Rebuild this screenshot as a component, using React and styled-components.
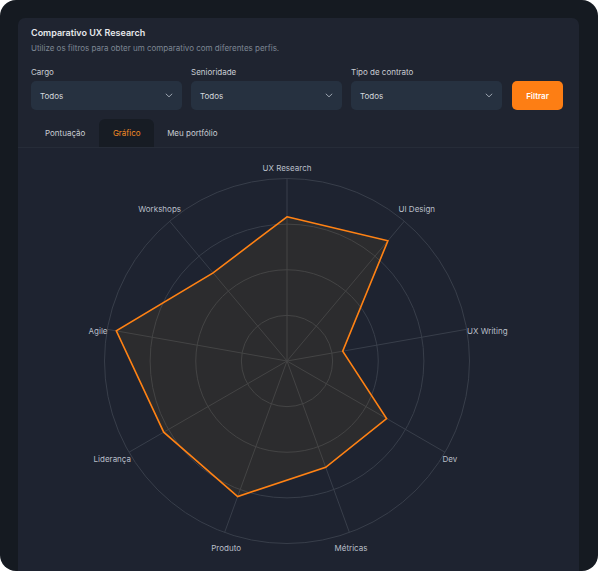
import styled, { createGlobalStyle } from "styled-components";

const GlobalStyle = createGlobalStyle`
  html, body {
    margin: 0;
    padding: 0;
    background: #ffffff;
  }
  * {
    box-sizing: border-box;
  }
`;

const Frame = styled.div`
  width: 598px;
  height: 571px;
  background: #151a21;
  border-radius: 16px;
  overflow: hidden;
  padding: 18px 19px 0 18px;
  font-family: Inter, "Noto Sans", sans-serif;
`;

const Card = styled.div`
  background: #1f2430;
  border-radius: 7px 7px 0 0;
  height: 100%;
  display: flex;
  flex-direction: column;
`;

const Header = styled.div`
  padding: 8px 15px 0 13px;
`;

const Title = styled.h1`
  margin: 0;
  font-size: 9px;
  line-height: 14px;
  font-weight: 600;
  color: #e6e8ec;
`;

const Subtitle = styled.p`
  margin: 2px 0 0;
  font-size: 8px;
  line-height: 12px;
  color: #7d8693;
`;

const Filters = styled.div`
  display: grid;
  grid-template-columns: 151px 151px 151px 52px;
  column-gap: 9px;
  align-items: end;
  margin-top: 12px;
`;

const Field = styled.div`
  display: flex;
  flex-direction: column;
  gap: 3px;
`;

const Label = styled.span`
  font-size: 8px;
  line-height: 12px;
  color: #c9cdd3;
`;

const Select = styled.div`
  height: 29px;
  background: #263140;
  border-radius: 5px;
  display: flex;
  align-items: center;
  justify-content: space-between;
  padding: 0 9px 0 9px;
  font-size: 8px;
  color: #d3d7dd;
`;

const FilterButton = styled.button`
  height: 29px;
  margin-left: 1px;
  border: none;
  border-radius: 5px;
  background: #fd7e14;
  color: #ffffff;
  font-family: inherit;
  font-size: 8px;
  font-weight: 600;
  padding: 0;
`;

const Tabs = styled.div`
  display: flex;
  margin-top: 9px;
  padding-left: 13px;
  border-bottom: 1px solid #262c38;
`;

const Tab = styled.div`
  height: 28px;
  padding: 0 ${(p) => p.$pad}px;
  display: flex;
  align-items: center;
  font-size: 8px;
  color: ${(p) => (p.$active ? "#f28a24" : "#c9cdd3")};
  background: ${(p) => (p.$active ? "#171c24" : "transparent")};
  border-radius: 6px 6px 0 0;
`;

const Panel = styled.div`
  flex: 1;
  background: #1e2330;
`;

const ChartSvg = styled.svg`
  display: block;
  font-family: Inter, "Noto Sans", sans-serif;
`;

const Chevron = () => (
  <svg width="8" height="5" viewBox="0 0 8 5" fill="none">
    <path d="M0.8 0.8 L4 3.8 L7.2 0.8" stroke="#9aa3ae" strokeWidth="1" />
  </svg>
);

const axes = [
  { name: "UX Research", value: 0.79, lx: 269, ly: 20, anchor: "middle" },
  { name: "UI Design", value: 0.86, lx: 380.5, ly: 61, anchor: "start" },
  { name: "UX Writing", value: 0.31, lx: 449, ly: 183, anchor: "start" },
  { name: "Dev", value: 0.63, lx: 424.5, ly: 311, anchor: "start" },
  { name: "Métricas", value: 0.62, lx: 316.5, ly: 400, anchor: "start" },
  { name: "Produto", value: 0.79, lx: 223, ly: 400, anchor: "end" },
  { name: "Liderança", value: 0.78, lx: 113, ly: 311, anchor: "end" },
  { name: "Agile", value: 0.95, lx: 89.5, ly: 183, anchor: "end" },
  { name: "Workshops", value: 0.63, lx: 163, ly: 61, anchor: "end" },
];

const CX = 269;
const CY = 213;
const R = 182.5;

const point = (i, r) => {
  const a = (i * 2 * Math.PI) / axes.length;
  return [CX + r * Math.sin(a), CY - r * Math.cos(a)];
};

const RadarChart = () => {
  const shape = axes
    .map((ax, i) => point(i, ax.value * R).map((n) => n.toFixed(1)).join(","))
    .join(" ");
  return (
    <ChartSvg width="561" height="424">
      {[0.25, 0.5, 0.75, 1].map((f) => (
        <circle key={f} cx={CX} cy={CY} r={R * f} fill="none" stroke="#383e4a" strokeWidth="1" />
      ))}
      {axes.map((ax, i) => {
        const [x, y] = point(i, R);
        return <line key={ax.name} x1={CX} y1={CY} x2={x} y2={y} stroke="#383e4a" strokeWidth="1" />;
      })}
      <polygon
        points={shape}
        fill="#b47d1c"
        fillOpacity="0.1"
        stroke="#ff8214"
        strokeWidth="1.6"
        strokeLinejoin="miter"
      />
      {axes.map((ax) => (
        <text
          key={ax.name}
          x={ax.lx}
          y={ax.ly}
          textAnchor={ax.anchor}
          dominantBaseline="central"
          fontSize="8"
          fill="#b9bfc8"
        >
          {ax.name}
        </text>
      ))}
    </ChartSvg>
  );
};

const filters = [
  { label: "Cargo", value: "Todos" },
  { label: "Senioridade", value: "Todos" },
  { label: "Tipo de contrato", value: "Todos" },
];

export default function App() {
  return (
    <>
      <GlobalStyle />
      <Frame>
        <Card>
          <Header>
            <Title>Comparativo UX Research</Title>
            <Subtitle>Utilize os filtros para obter um comparativo com diferentes perfis.</Subtitle>
            <Filters>
              {filters.map((f) => (
                <Field key={f.label}>
                  <Label>{f.label}</Label>
                  <Select>
                    {f.value}
                    <Chevron />
                  </Select>
                </Field>
              ))}
              <FilterButton>Filtrar</FilterButton>
            </Filters>
          </Header>
          <Tabs>
            <Tab $pad={14}>Pontuação</Tab>
            <Tab $pad={13.5} $active>Gráfico</Tab>
            <Tab $pad={13}>Meu portfólio</Tab>
          </Tabs>
          <Panel>
            <RadarChart />
          </Panel>
        </Card>
      </Frame>
    </>
  );
}
